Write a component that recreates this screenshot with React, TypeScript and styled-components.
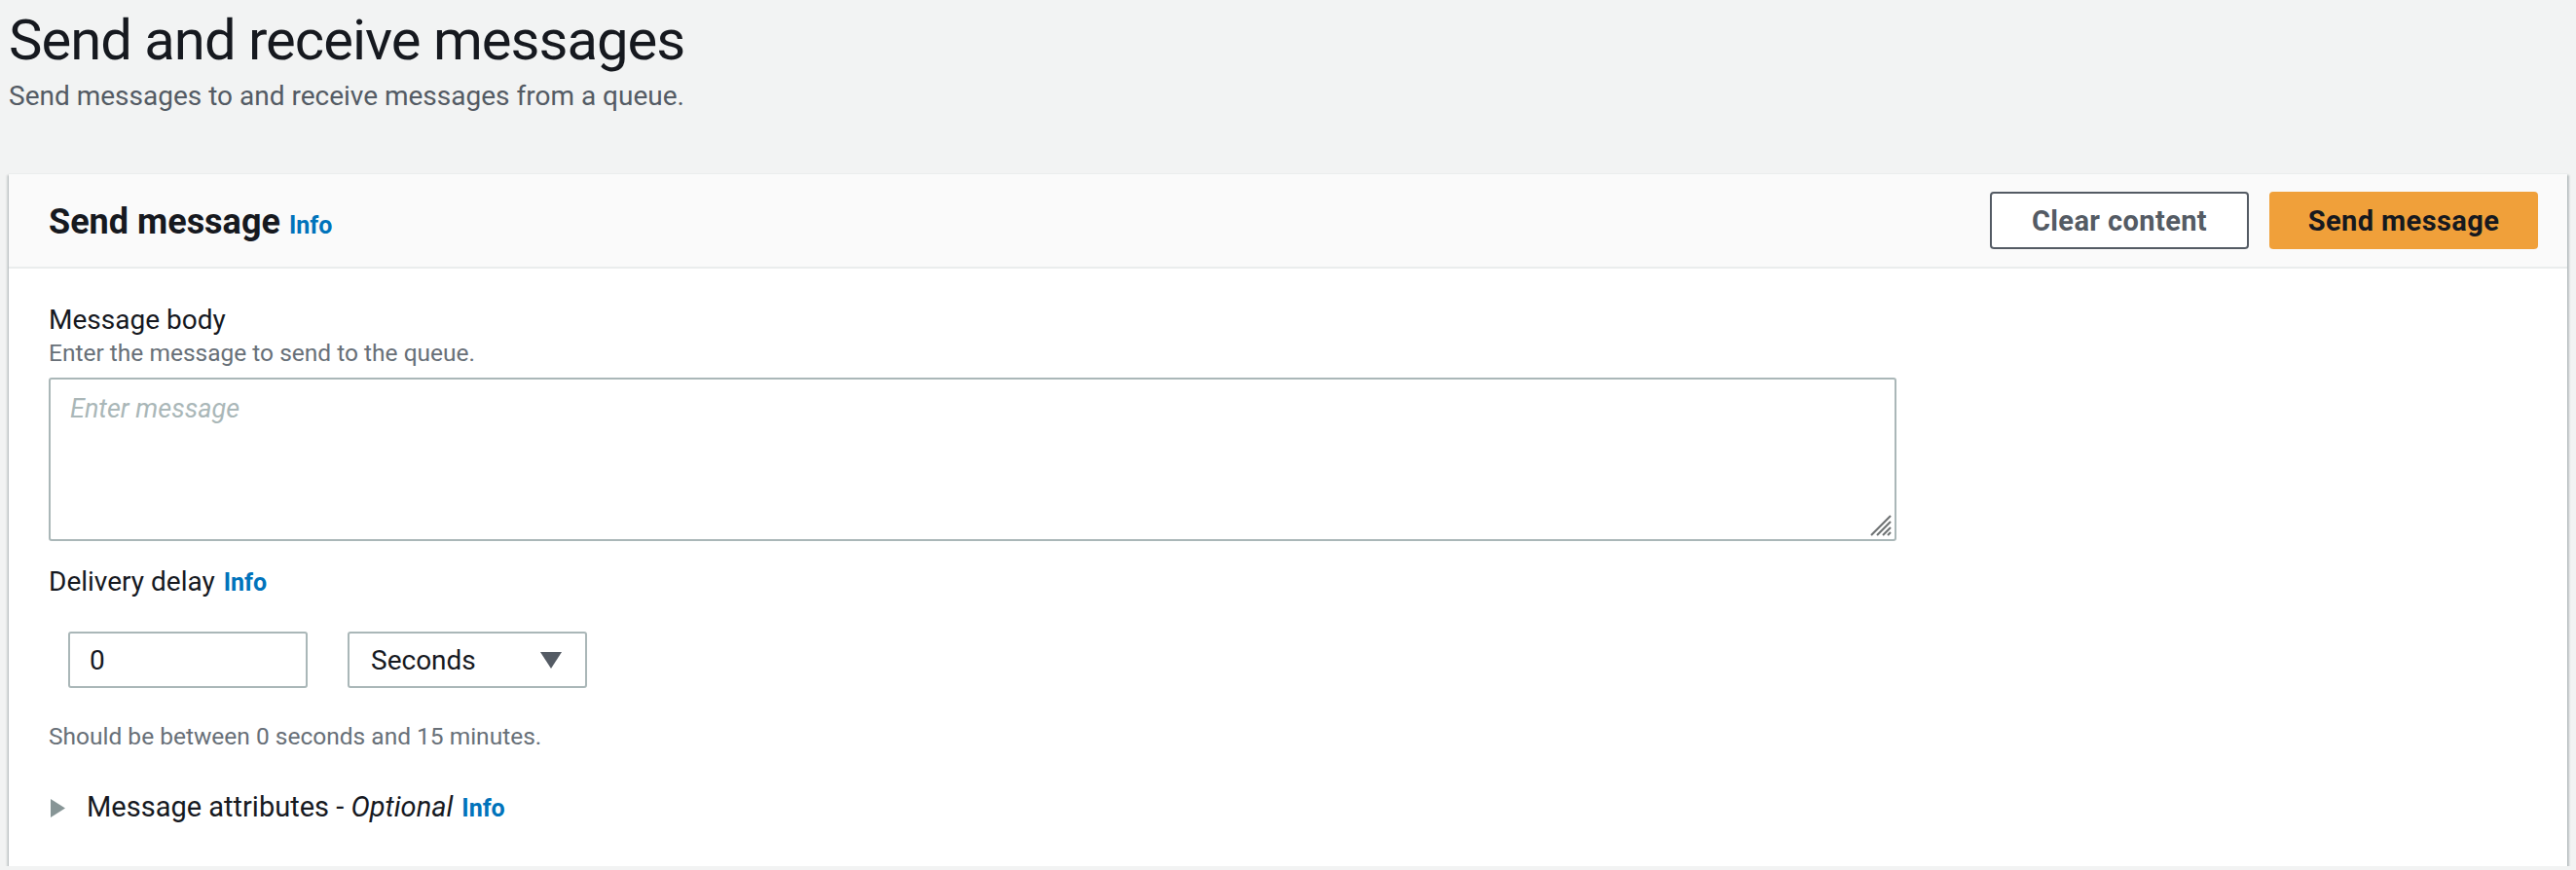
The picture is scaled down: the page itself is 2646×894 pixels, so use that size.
import React from "react";
import styled, { createGlobalStyle } from "styled-components";

const GlobalStyle = createGlobalStyle`
  body {
    margin: 0;
    background: #f2f3f3;
    font-family: Roboto, "Liberation Sans", sans-serif;
    color: #16191f;
  }
  * { box-sizing: border-box; }
`;

const Page = styled.div`
  padding: 6px 9px 0;
`;

const PageTitle = styled.h1`
  margin: 0;
  font-size: 58px;
  line-height: 70px;
  font-weight: 400;
  letter-spacing: -1px;
  color: #16191f;
`;

const PageSubtitle = styled.p`
  margin: 5px 0 0;
  font-size: 28px;
  line-height: 36px;
  color: #545b64;
`;

const Card = styled.section`
  margin-top: 61px;
  background: #fff;
  border-top: 1px solid #eaeded;
  box-shadow: 0 2px 2px 0 rgba(0, 28, 36, 0.35), 2px 2px 2px 0 rgba(0, 28, 36, 0.18),
    -2px 2px 2px 0 rgba(0, 28, 36, 0.12);
`;

const CardHeader = styled.div`
  display: flex;
  align-items: center;
  justify-content: space-between;
  height: 97px;
  padding: 0 30px 0 41px;
  background: #fafafa;
  border-bottom: 2px solid #eaeded;
`;

const CardTitle = styled.h2`
  margin: 6px 0 0;
  font-size: 36px;
  line-height: 42px;
  font-weight: 700;
  color: #16191f;
`;

const InfoLink = styled.a<{ $size?: number }>`
  margin-left: 9px;
  font-size: ${(p) => p.$size ?? 25}px;
  font-weight: 700;
  font-style: normal;
  color: #0073bb;
  text-decoration: none;
`;

const Actions = styled.div`
  display: flex;
  gap: 21px;
`;

const Button = styled.button<{ $primary?: boolean; $width: number }>`
  width: ${(p) => p.$width}px;
  height: 59px;
  padding: 0;
  border-radius: 4px;
  border: 2px solid ${(p) => (p.$primary ? "#f0a03a" : "#545b64")};
  background: ${(p) => (p.$primary ? "#f0a03a" : "#fff")};
  color: ${(p) => (p.$primary ? "#16191f" : "#545b64")};
  font-family: inherit;
  font-size: 29px;
  font-weight: 700;
  letter-spacing: 0.4px;
  cursor: pointer;
`;

const CardBody = styled.div`
  padding: 35px 41px 41px;
`;

const Label = styled.div`
  font-size: 28px;
  line-height: 36px;
  color: #16191f;
`;

const Description = styled.div`
  font-size: 24.5px;
  line-height: 32px;
  color: #687078;
`;

const AreaWrap = styled.div`
  position: relative;
  width: 1898px;
  margin: 9px 0 24px;
`;

const MessageArea = styled.textarea`
  display: block;
  width: 100%;
  height: 168px;
  padding: 14px 20px;
  border: 2px solid #aab7b8;
  border-radius: 3px;
  font-family: inherit;
  font-size: 27px;
  color: #16191f;
  outline: none;
  resize: none;

  &::placeholder {
    color: #aab7b8;
    font-style: italic;
  }
`;

const Grip = styled.svg`
  position: absolute;
  right: 4px;
  bottom: 4px;
  pointer-events: none;
`;

const DelayRow = styled.div`
  display: flex;
  gap: 41px;
  margin-top: 32px;
  padding-left: 20px;
`;

const NumberBox = styled.input`
  width: 246px;
  height: 58px;
  padding: 0 20px;
  border: 2px solid #aab7b8;
  border-radius: 3px;
  font-family: inherit;
  font-size: 28px;
  color: #16191f;
  outline: none;
`;

const SelectBox = styled.div`
  display: flex;
  align-items: center;
  justify-content: space-between;
  width: 246px;
  height: 58px;
  padding: 0 24px 0 22px;
  border: 2px solid #aab7b8;
  border-radius: 3px;
  background: #fff;
  font-size: 28px;
  color: #16191f;
`;

const Hint = styled(Description)`
  margin-top: 34px;
`;

const Expander = styled.div`
  display: flex;
  align-items: center;
  gap: 22px;
  margin-top: 38px;
  padding-left: 2px;
  font-size: 29px;
  line-height: 36px;
  color: #16191f;

  em {
    font-style: italic;
  }
`;

export default function App() {
  return (
    <>
      <GlobalStyle />
      <Page>
        <PageTitle>Send and receive messages</PageTitle>
        <PageSubtitle>Send messages to and receive messages from a queue.</PageSubtitle>

        <Card>
          <CardHeader>
            <CardTitle>
              Send message<InfoLink href="#">Info</InfoLink>
            </CardTitle>
            <Actions>
              <Button $width={266}>Clear content</Button>
              <Button $primary $width={276}>
                Send message
              </Button>
            </Actions>
          </CardHeader>

          <CardBody>
            <Label>Message body</Label>
            <Description>Enter the message to send to the queue.</Description>
            <AreaWrap>
              <MessageArea placeholder="Enter message" />
              <Grip width="24" height="24" viewBox="0 0 24 24">
                <g stroke="#6f7374" strokeWidth="2.2">
                  <line x1="2" y1="22" x2="22" y2="2" />
                  <line x1="8" y1="22" x2="22" y2="8" />
                  <line x1="14" y1="22" x2="22" y2="14" />
                  <line x1="19" y1="22" x2="22" y2="19" />
                </g>
              </Grip>
            </AreaWrap>

            <Label>
              Delivery delay<InfoLink href="#">Info</InfoLink>
            </Label>
            <DelayRow>
              <NumberBox defaultValue="0" />
              <SelectBox>
                <span>Seconds</span>
                <svg width="22" height="17" viewBox="0 0 22 17">
                  <polygon points="0,0 22,0 11,17" fill="#545b64" />
                </svg>
              </SelectBox>
            </DelayRow>
            <Hint>Should be between 0 seconds and 15 minutes.</Hint>

            <Expander>
              <svg width="15" height="19" viewBox="0 0 15 19">
                <polygon points="0,0 15,9.5 0,19" fill="#879596" />
              </svg>
              <span>
                Message attributes - <em>Optional</em>
                <InfoLink href="#">Info</InfoLink>
              </span>
            </Expander>
          </CardBody>
        </Card>
      </Page>
    </>
  );
}
